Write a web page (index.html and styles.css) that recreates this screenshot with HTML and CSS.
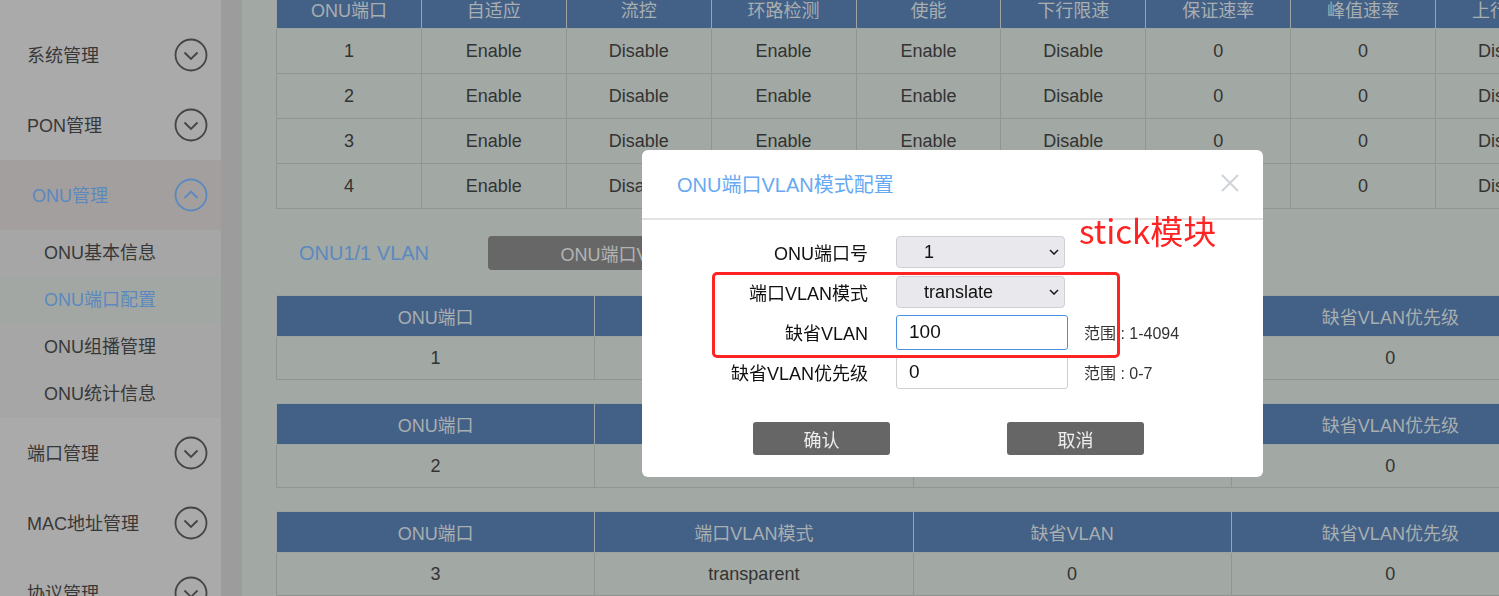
FILE: index.html
```html
<!DOCTYPE html>
<html lang="zh-CN">
<head>
    <meta charset="UTF-8">
    <title>ONU端口配置</title>
    <link rel="stylesheet" href="styles.css">
</head>
<body>
    <div class="page">
        <aside class="sidebar">
            <div class="menu-item">
                <span>系统管理</span>
                <svg class="fold" width="34" height="34" viewBox="0 0 34 34"><circle cx="17" cy="17" r="15.5"/><polyline points="10.5,14.5 17,21 23.5,14.5"/></svg>
            </div>
            <div class="menu-item">
                <span>PON管理</span>
                <svg class="fold" width="34" height="34" viewBox="0 0 34 34"><circle cx="17" cy="17" r="15.5"/><polyline points="10.5,14.5 17,21 23.5,14.5"/></svg>
            </div>
            <div class="menu-item open">
                <span>ONU管理</span>
                <svg class="fold" width="34" height="34" viewBox="0 0 34 34"><circle cx="17" cy="17" r="15.5"/><polyline points="10.5,20 17,13.5 23.5,20"/></svg>
            </div>
            <div class="submenu">
                <div class="submenu-item">ONU基本信息</div>
                <div class="submenu-item active">ONU端口配置</div>
                <div class="submenu-item">ONU组播管理</div>
                <div class="submenu-item">ONU统计信息</div>
            </div>
            <div class="menu-item">
                <span>端口管理</span>
                <svg class="fold" width="34" height="34" viewBox="0 0 34 34"><circle cx="17" cy="17" r="15.5"/><polyline points="10.5,14.5 17,21 23.5,14.5"/></svg>
            </div>
            <div class="menu-item">
                <span>MAC地址管理</span>
                <svg class="fold" width="34" height="34" viewBox="0 0 34 34"><circle cx="17" cy="17" r="15.5"/><polyline points="10.5,14.5 17,21 23.5,14.5"/></svg>
            </div>
            <div class="menu-item">
                <span>协议管理</span>
                <svg class="fold" width="34" height="34" viewBox="0 0 34 34"><circle cx="17" cy="17" r="15.5"/><polyline points="10.5,14.5 17,21 23.5,14.5"/></svg>
            </div>
        </aside>
        <div class="gutter"></div>
        <main class="main">
            <table class="grid wide">
                <tr>
                    <th>ONU端口</th><th>自适应</th><th>流控</th><th>环路检测</th><th>使能</th><th>下行限速</th><th>保证速率</th><th>峰值速率</th><th>上行限速</th>
                </tr>
                <tr><td>1</td><td>Enable</td><td>Disable</td><td>Enable</td><td>Enable</td><td>Disable</td><td>0</td><td>0</td><td>Disable</td></tr>
                <tr><td>2</td><td>Enable</td><td>Disable</td><td>Enable</td><td>Enable</td><td>Disable</td><td>0</td><td>0</td><td>Disable</td></tr>
                <tr><td>3</td><td>Enable</td><td>Disable</td><td>Enable</td><td>Enable</td><td>Disable</td><td>0</td><td>0</td><td>Disable</td></tr>
                <tr><td>4</td><td>Enable</td><td>Disable</td><td>Enable</td><td>Enable</td><td>Disable</td><td>0</td><td>0</td><td>Disable</td></tr>
            </table>

            <div class="toolbar">
                <span class="crumb">ONU1/1 VLAN</span>
                <button class="btn-dark">ONU端口VLAN模式配置</button>
            </div>

            <table class="grid vlan">
                <tr><th>ONU端口</th><th>端口VLAN模式</th><th>缺省VLAN</th><th>缺省VLAN优先级</th></tr>
                <tr><td>1</td><td>transparent</td><td>0</td><td>0</td></tr>
            </table>
            <table class="grid vlan">
                <tr><th>ONU端口</th><th>端口VLAN模式</th><th>缺省VLAN</th><th>缺省VLAN优先级</th></tr>
                <tr><td>2</td><td>transparent</td><td>0</td><td>0</td></tr>
            </table>
            <table class="grid vlan">
                <tr><th>ONU端口</th><th>端口VLAN模式</th><th>缺省VLAN</th><th>缺省VLAN优先级</th></tr>
                <tr><td>3</td><td>transparent</td><td>0</td><td>0</td></tr>
            </table>
        </main>
    </div>

    <div class="modal">
        <div class="modal-head">
            <span class="modal-title">ONU端口VLAN模式配置</span>
            <svg class="close" width="18" height="18" viewBox="0 0 18 18"><path d="M1 1 L17 17 M17 1 L1 17"/></svg>
        </div>
        <div class="form">
            <div class="form-row">
                <label class="form-label">ONU端口号</label>
                <div class="select-wrap">
                    <select class="select"><option>1</option><option>2</option><option>3</option><option>4</option></select>
                    <svg class="caret" width="10" height="6" viewBox="0 0 10 6"><polyline points="1,1 5,5 9,1"/></svg>
                </div>
            </div>
            <div class="form-row">
                <label class="form-label">端口VLAN模式</label>
                <div class="select-wrap">
                    <select class="select"><option>translate</option><option>transparent</option><option>tag</option></select>
                    <svg class="caret" width="10" height="6" viewBox="0 0 10 6"><polyline points="1,1 5,5 9,1"/></svg>
                </div>
            </div>
            <div class="form-row">
                <label class="form-label">缺省VLAN</label>
                <input class="input focused" type="text" value="100">
                <span class="hint">范围 : 1-4094</span>
            </div>
            <div class="form-row">
                <label class="form-label">缺省VLAN优先级</label>
                <input class="input" type="text" value="0">
                <span class="hint">范围 : 0-7</span>
            </div>
            <div class="actions">
                <button class="btn-modal">确认</button>
                <button class="btn-modal">取消</button>
            </div>
        </div>

        <!-- annotation drawn on top of the screenshot -->
        <div class="mark-box"></div>
        <div class="mark-text">stick模块</div>
    </div>
</body>
</html>
```

FILE: styles.css
```css
* {
    box-sizing: border-box;
}

html, body {
    margin: 0;
    height: 100%;
    overflow: hidden;
}

body {
    font-family: "Liberation Sans", "Noto Sans CJK SC", sans-serif;
    background-color: #a2a8a4;
}

.page {
    display: flex;
    height: 596px;
}

/* sidebar */
.sidebar {
    width: 221px;
    flex: none;
    background-color: #aaaaaa;
    padding-top: 20px;
}

.menu-item {
    height: 70px;
    display: flex;
    align-items: center;
    justify-content: space-between;
    padding: 0 13px 0 27px;
    font-size: 18px;
    color: #383838;
}

.menu-item span {
    padding-bottom: 3px;
}

.menu-item.open {
    background-color: #a39f9e;
    color: #5b89bf;
    padding-left: 32px;
}

.fold {
    fill: none;
    stroke: #444;
    stroke-width: 1.8;
}

.menu-item.open .fold {
    stroke: #5b89bf;
}

.submenu {
    background-color: #a6a6a6;
}

.submenu-item {
    height: 47px;
    line-height: 46px;
    padding-left: 44px;
    font-size: 18px;
    color: #383838;
}

.submenu-item.active {
    color: #5b89bf;
    background-color: #a3a7a4;
}

.gutter {
    width: 21px;
    flex: none;
    background-color: #9c9c9c;
}

/* main */
.main {
    flex: 1;
    min-width: 0;
    overflow: hidden;
    padding-left: 34px;
}

.grid {
    border-collapse: collapse;
    table-layout: fixed;
    font-size: 18px;
    color: #333;
    text-align: center;
}

.grid th {
    background-color: #436186;
    color: #a9aeb1;
    font-weight: normal;
    border: 1px solid #9da3a3;
    padding: 0;
}

.grid td {
    border: 1px solid #8f9591;
    padding: 0;
}

.wide {
    width: 1305px;
    margin-top: -12px;
}

.wide th {
    height: 40px;
}

.wide td {
    height: 45px;
}

.vlan {
    width: 1274px;
    margin-top: 23px;
}

.vlan th {
    height: 41px;
}

.vlan td {
    height: 43px;
}

.toolbar {
    display: flex;
    align-items: center;
    margin: 27px 0 25px;
}

.crumb {
    width: 212px;
    padding-left: 23px;
    font-size: 20px;
    color: #5b89bf;
}

.btn-dark {
    width: 340px;
    height: 34px;
    border: none;
    border-radius: 4px;
    background-color: #676767;
    color: #b3b3b3;
    font-family: inherit;
    font-size: 18px;
}

/* modal */
.modal {
    position: fixed;
    left: 642px;
    top: 150px;
    width: 621px;
    height: 327px;
    background-color: #fff;
    border-radius: 6px;
}

.modal-head {
    height: 70px;
    display: flex;
    align-items: center;
    justify-content: space-between;
    padding: 0 24px 2px 35px;
    border-bottom: 2px solid #e3e3e3;
}

.modal-title {
    font-size: 20px;
    color: #67a9f2;
}

.close {
    fill: none;
    stroke: #cfd4da;
    stroke-width: 2;
}

.form {
    padding-top: 12px;
}

.form-row {
    display: flex;
    align-items: center;
    height: 40px;
}

.form-label {
    width: 226px;
    margin-right: 28px;
    text-align: right;
    font-size: 18px;
    color: #111;
}

.select-wrap {
    position: relative;
}

.select {
    appearance: none;
    width: 169px;
    height: 32px;
    padding-left: 27px;
    border: 1px solid #cfcfd6;
    border-radius: 4px;
    background-color: #e9e9ed;
    font-family: inherit;
    font-size: 18px;
    color: #111;
}

.caret {
    position: absolute;
    right: 6px;
    top: 13px;
    fill: none;
    stroke: #222;
    stroke-width: 1.6;
}

.input {
    width: 172px;
    height: 34px;
    padding-left: 12px;
    border: 1px solid #cfcfcf;
    border-radius: 3px;
    font-family: inherit;
    font-size: 19px;
    color: #111;
    outline: none;
}

.input.focused {
    height: 35px;
    border-color: #4a90e2;
}

.hint {
    margin-left: 16px;
    font-size: 16px;
    color: #333;
}

.actions {
    display: flex;
    gap: 117px;
    padding-left: 111px;
    margin-top: 30px;
}

.btn-modal {
    width: 137px;
    height: 33px;
    border: none;
    border-radius: 3px;
    background-color: #666;
    color: #eee;
    font-family: inherit;
    font-size: 18px;
}

/* red annotation */
.mark-box {
    position: absolute;
    left: 70px;
    top: 122px;
    width: 408px;
    height: 86px;
    border: 3px solid #ff2424;
    border-radius: 5px;
}

.mark-text {
    position: absolute;
    left: 437px;
    top: 64px;
    font-family: "Noto Sans CJK SC", sans-serif;
    font-size: 33px;
    line-height: 1;
    color: #ff2323;
}
```
